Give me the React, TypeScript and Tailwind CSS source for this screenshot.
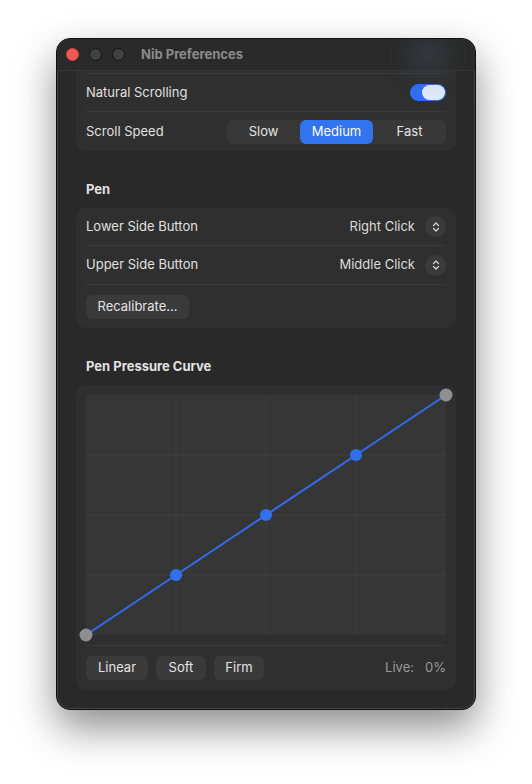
import React from "react";
import { ChevronsUpDown } from "lucide-react";

const FONT = { fontFamily: 'Inter, "Noto Sans", "Liberation Sans", sans-serif' };

function Stepper({ value }: { value: string }) {
  return (
    <div className="flex items-center gap-[10px]">
      <span className="text-[13px] text-[#dcdcdc]">{value}</span>
      <div className="w-[21px] h-[21px] rounded-full bg-[#3a3a3a] flex items-center justify-center">
        <ChevronsUpDown size={12} strokeWidth={2.4} className="text-[#d8d8d8]" />
      </div>
    </div>
  );
}

function PillButton({ label, className = "" }: { label: string; className?: string }) {
  return (
    <button
      className={`h-[24px] rounded-[6px] bg-[#3a3a3a] text-[13px] text-[#e4e4e4] flex items-center justify-center ${className}`}
    >
      {label}
    </button>
  );
}

function PressureCurve() {
  const w = 360;
  const h = 240;
  const pts: [number, number][] = [
    [0, 240],
    [90, 180],
    [180, 120],
    [270, 60],
    [360, 0],
  ];
  return (
    <svg width={w} height={h} className="block overflow-visible bg-[#363636]">
      {[90, 180, 270].map((x) => (
        <line key={`v${x}`} x1={x} y1={0} x2={x} y2={h} stroke="#3f3f3f" strokeWidth={1} />
      ))}
      {[60, 120, 180].map((y) => (
        <line key={`h${y}`} x1={0} y1={y} x2={w} y2={y} stroke="#3f3f3f" strokeWidth={1} />
      ))}
      <polyline
        points={pts.map((p) => p.join(",")).join(" ")}
        fill="none"
        stroke="#2f6ff0"
        strokeWidth={2}
      />
      {pts.slice(1, 4).map(([x, y]) => (
        <circle key={`p${x}`} cx={x} cy={y} r={6} fill="#2f6ff0" />
      ))}
      <circle cx={0} cy={240} r={6.5} fill="#8e8e93" />
      <circle cx={360} cy={0} r={6.5} fill="#8e8e93" />
    </svg>
  );
}

export default function App() {
  return (
    <div className="w-[532px] h-[784px] bg-white pt-[38px] pl-[56px]" style={FONT}>
      <div className="relative w-[420px] h-[672px] rounded-[14px] bg-[#292929] border border-[#101010] overflow-hidden flex flex-col shadow-[0_18px_40px_rgba(0,0,0,0.45),inset_0_0_0_1px_rgba(255,255,255,0.13)]">
        {/* title bar */}
        <div className="relative h-[32px] shrink-0 flex items-center border-b border-[#363636] bg-[#2a2a2a]">
          <div className="flex items-center gap-[10px] pl-[9px]">
            <div className="w-[13px] h-[13px] rounded-full bg-[#ee5a52] border border-[#d8433c]" />
            <div className="w-[13px] h-[13px] rounded-full bg-[#414141] border border-[#161616]" />
            <div className="w-[13px] h-[13px] rounded-full bg-[#414141] border border-[#161616]" />
          </div>
          <span className="ml-[16px] text-[13px] font-bold text-[#8a8a8a]">Nib Preferences</span>
          <div className="absolute right-[28px] top-[1px] w-[38px] h-[30px] rounded-full bg-[#4a5066] opacity-50 blur-md" />
        </div>

        {/* scrolling content */}
        <div className="flex flex-col px-[19px]">
          {/* trackpad card, scrolled partly under the title bar */}
          <div className="bg-[#2f2f2f] rounded-b-[10px] px-[10px] pt-[2px]">
            <div className="h-[38px] border-t border-[#3a3a3a] flex items-center justify-between">
              <span className="text-[13px] text-[#e0e0e0]">Natural Scrolling</span>
              <div className="w-[36px] h-[17px] rounded-full bg-[#2f6ff0] flex items-center justify-end pr-[1px]">
                <div className="w-[23px] h-[15px] rounded-full bg-[#dfe7fa]" />
              </div>
            </div>
            <div className="h-[40px] border-t border-[#3a3a3a] flex items-center justify-between">
              <span className="text-[13px] text-[#e0e0e0]">Scroll Speed</span>
              <div className="w-[219px] h-[24px] rounded-[6px] bg-[#383838] grid grid-cols-3 text-[13px] text-[#e4e4e4]">
                <div className="flex items-center justify-center">Slow</div>
                <div className="flex items-center justify-center rounded-[6px] bg-[#3274f0] text-white">Medium</div>
                <div className="flex items-center justify-center">Fast</div>
              </div>
            </div>
          </div>

          {/* pen */}
          <div className="mt-[31px] h-[16px] px-[10px] flex items-center text-[13px] font-bold text-[#e2e2e2]">Pen</div>
          <div className="mt-[10px] bg-[#2f2f2f] rounded-[10px] px-[10px]">
            <div className="h-[37px] flex items-center justify-between">
              <span className="text-[13px] text-[#e0e0e0]">Lower Side Button</span>
              <Stepper value="Right Click" />
            </div>
            <div className="h-[39px] border-t border-[#3a3a3a] flex items-center justify-between">
              <span className="text-[13px] text-[#e0e0e0]">Upper Side Button</span>
              <Stepper value="Middle Click" />
            </div>
            <div className="border-t border-[#3a3a3a] pt-[10px] pb-[9px]">
              <PillButton label="Recalibrate…" className="w-[103px]" />
            </div>
          </div>

          {/* pressure curve */}
          <div className="mt-[31px] h-[16px] px-[10px] flex items-center text-[13px] font-bold text-[#e2e2e2]">Pen Pressure Curve</div>
          <div className="mt-[10px] bg-[#2f2f2f] rounded-[10px] p-[10px]">
            <PressureCurve />
            <div className="mt-[10px] border-t border-[#3a3a3a] pt-[10px] flex items-center">
              <PillButton label="Linear" className="w-[62px]" />
              <PillButton label="Soft" className="w-[50px] ml-[8px]" />
              <PillButton label="Firm" className="w-[50px] ml-[8px]" />
              <div className="ml-auto flex items-center text-[13px] text-[#9a9a9a]">
                <span>Live:</span>
                <span className="w-[32px] text-right">0%</span>
              </div>
            </div>
          </div>
        </div>
      </div>
    </div>
  );
}
